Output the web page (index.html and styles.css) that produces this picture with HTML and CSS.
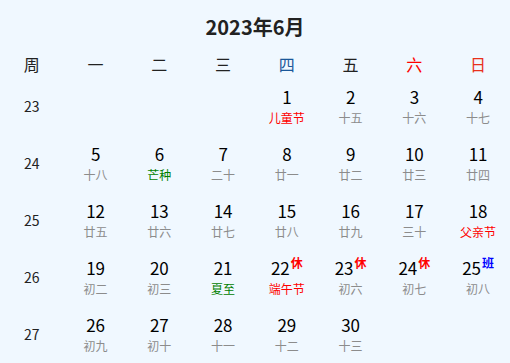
FILE: index.html
```html
<!DOCTYPE html>
<html lang="zh-CN">
<head>
<meta charset="utf-8">
<title>2023年6月</title>
<link rel="stylesheet" href="styles.css">
</head>
<body>
<div class="cal">
  <div class="title">2023年6月</div>
  <div class="row head">
    <div>周</div><div>一</div><div>二</div><div>三</div><div class="thu">四</div><div>五</div><div class="sat">六</div><div class="sun">日</div>
  </div>
  <div class="row">
    <div class="wk">23</div>
    <div></div><div></div><div></div>
    <div class="day"><div class="n">1</div><div class="l fest">儿童节</div></div>
    <div class="day"><div class="n">2</div><div class="l">十五</div></div>
    <div class="day"><div class="n">3</div><div class="l">十六</div></div>
    <div class="day"><div class="n">4</div><div class="l">十七</div></div>
  </div>
  <div class="row">
    <div class="wk">24</div>
    <div class="day"><div class="n">5</div><div class="l">十八</div></div>
    <div class="day"><div class="n">6</div><div class="l term">芒种</div></div>
    <div class="day"><div class="n">7</div><div class="l">二十</div></div>
    <div class="day"><div class="n">8</div><div class="l">廿一</div></div>
    <div class="day"><div class="n">9</div><div class="l">廿二</div></div>
    <div class="day"><div class="n">10</div><div class="l">廿三</div></div>
    <div class="day"><div class="n">11</div><div class="l">廿四</div></div>
  </div>
  <div class="row">
    <div class="wk">25</div>
    <div class="day"><div class="n">12</div><div class="l">廿五</div></div>
    <div class="day"><div class="n">13</div><div class="l">廿六</div></div>
    <div class="day"><div class="n">14</div><div class="l">廿七</div></div>
    <div class="day"><div class="n">15</div><div class="l">廿八</div></div>
    <div class="day"><div class="n">16</div><div class="l">廿九</div></div>
    <div class="day"><div class="n">17</div><div class="l">三十</div></div>
    <div class="day"><div class="n">18</div><div class="l fest">父亲节</div></div>
  </div>
  <div class="row">
    <div class="wk">26</div>
    <div class="day"><div class="n">19</div><div class="l">初二</div></div>
    <div class="day"><div class="n">20</div><div class="l">初三</div></div>
    <div class="day"><div class="n">21</div><div class="l term">夏至</div></div>
    <div class="day"><div class="n">22<span class="tag off">休</span></div><div class="l fest">端午节</div></div>
    <div class="day"><div class="n">23<span class="tag off">休</span></div><div class="l">初六</div></div>
    <div class="day"><div class="n">24<span class="tag off">休</span></div><div class="l">初七</div></div>
    <div class="day"><div class="n">25<span class="tag work">班</span></div><div class="l">初八</div></div>
  </div>
  <div class="row">
    <div class="wk">27</div>
    <div class="day"><div class="n">26</div><div class="l">初九</div></div>
    <div class="day"><div class="n">27</div><div class="l">初十</div></div>
    <div class="day"><div class="n">28</div><div class="l">十一</div></div>
    <div class="day"><div class="n">29</div><div class="l">十二</div></div>
    <div class="day"><div class="n">30</div><div class="l">十三</div></div>
    <div></div><div></div>
  </div>
</div>
</body>
</html>
```
FILE: styles.css
```css
html, body {
  margin: 0;
  padding: 0;
  background: #f0f8ff;
}
body {
  font-family: "Noto Sans CJK SC", "Noto Sans", sans-serif;
  color: #111;
}
.cal {
  width: 510px;
  padding-top: 13px;
}
.title {
  text-align: center;
  font-size: 20px;
  font-weight: bold;
  line-height: 28px;
  color: #222;
}
.row {
  display: grid;
  grid-template-columns: repeat(8, 1fr);
  align-items: center;
  text-align: center;
  padding-bottom: 17px;
}
.head {
  margin-top: 7px;
  height: 32px;
  padding-bottom: 6px;
  font-size: 16px;
  line-height: 32px;
  color: #222;
}
.head .thu { color: #1a5799; }
.head .sat { color: #f00; }
.head .sun { color: #e8301c; }
.wk {
  font-size: 14px;
  line-height: 20px;
  color: #222;
}
.day {
  height: 40px;
}
.n {
  font-size: 17px;
  line-height: 22px;
  color: #000;
}
.l {
  font-size: 12px;
  line-height: 20px;
  color: #8c8c8c;
}
.l.fest { color: #f00; }
.l.term { color: #008000; }
.tag {
  font-size: 12px;
  font-weight: bold;
  vertical-align: 7px;
  line-height: 0;
  margin-left: 1px;
}
.tag.off { color: #f00; }
.tag.work { color: #00f; }
```
